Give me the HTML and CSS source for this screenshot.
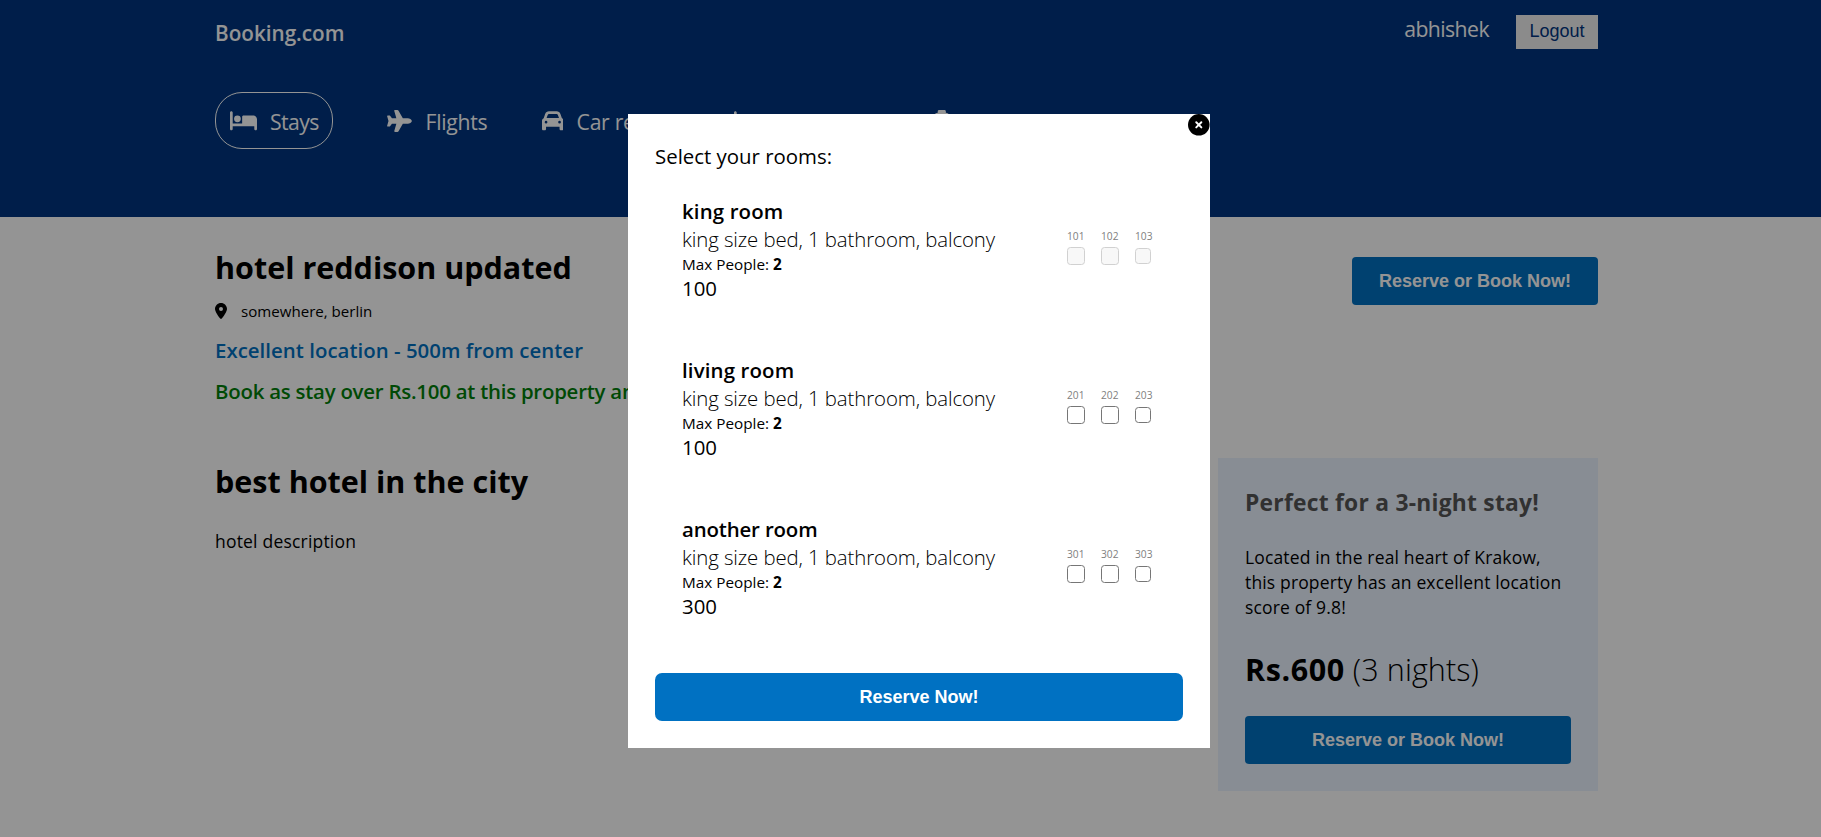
FILE: index.html
```html
<!DOCTYPE html>
<html lang="en">
<head>
<meta charset="utf-8">
<title>Booking.com</title>
<link rel="stylesheet" href="styles.css">
</head>
<body>
<svg class="sprites" width="0" height="0">
  <symbol id="bed" viewBox="0 0 640 512"><path d="M32 32c17.700 0 32 14.300 32 32v256h224V160c0-17.700 14.300-32 32-32h224c53 0 96 43 96 96v224c0 17.700-14.300 32-32 32s-32-14.300-32-32v-64H64v64c0 17.700-14.300 32-32 32S0 465.700 0 448V64C0 46.300 14.300 32 32 32zm144 96a80 80 0 1 1 0 160 80 80 0 1 1 0-160z"/></symbol>
  <symbol id="plane" viewBox="0 0 576 512"><path d="M482.300 192c34.200 0 93.700 29 93.700 64 0 36-59.500 64-93.700 64H365.700l-99.900 174.900c-5.700 10-16.300 16.100-27.800 16.100h-56.200c-10.600 0-18.300-10.200-15.400-20.400L214.900 320H112l-43.200 57.600c-3 4-7.800 6.400-12.800 6.400H14c-7.800 0-14-6.300-14-14 0-1.300.2-2.600.5-3.900L32 256 .5 145.900c-.4-1.300-.5-2.600-.5-3.900 0-7.800 6.300-14 14-14h42c5 0 9.800 2.400 12.800 6.400L112 192h102.900L166.400 21.400C163.500 11.200 171.200 1 181.800 1H238c11.500 0 22.100 6.200 27.800 16.100L365.700 192z"/></symbol>
  <symbol id="car" viewBox="0 0 512 512"><path fill-rule="evenodd" d="M135.200 117.400 109.100 192h293.800l-26.100-74.600c-4.500-12.800-16.600-21.400-30.200-21.400H165.400c-13.600 0-25.700 8.600-30.200 21.400zM39.600 196.800 74.800 96.300C88.300 57.800 124.600 32 165.400 32h181.200c40.800 0 77.100 25.800 90.600 64.300l35.200 100.500c23.200 9.600 39.600 32.500 39.600 59.200v192c0 17.700-14.300 32-32 32h-32c-17.700 0-32-14.300-32-32v-48H96v48c0 17.700-14.300 32-32 32H32c-17.700 0-32-14.300-32-32V256c0-26.700 16.400-49.600 39.600-59.200zM128 288a32 32 0 1 0-64 0 32 32 0 1 0 64 0zm288 32a32 32 0 1 0 0-64 32 32 0 1 0 0 64z"/></symbol>
  <symbol id="taxi" viewBox="0 0 512 512"><path fill-rule="evenodd" d="M192 0c-17.700 0-32 14.300-32 32v32c-41 2-72 26-85 64L39.600 228.800C16.400 238.400 0 261.300 0 288v192c0 17.700 14.300 32 32 32h32c17.700 0 32-14.300 32-32v-48h320v48c0 17.700 14.300 32 32 32h32c17.700 0 32-14.300 32-32V288c0-26.700-16.400-49.600-39.600-59.200L437 128c-13-38-44-62-85-64V32c0-17.700-14.300-32-32-32zM165 128h182c14 0 26 9 30 21l26 75H109l26-75c4-12 16-21 30-21z"/></symbol>
  <symbol id="pin" viewBox="0 0 384 512"><path fill-rule="evenodd" d="M215.700 499.200C267 435 384 279.400 384 192 384 86 298 0 192 0S0 86 0 192c0 87.400 117 243 168.300 307.200 12.300 15.300 35.100 15.300 47.400 0zM192 128a64 64 0 1 1 0 128 64 64 0 1 1 0-128z"/></symbol>
</svg>

<header class="header">
  <div class="topbar">
    <span class="brand">Booking.com</span>
    <div class="account">
      <span class="username">abhishek</span>
      <button class="logout">Logout</button>
    </div>
  </div>
  <nav class="nav">
    <a class="nav-item active"><svg class="icon-bed"><use href="#bed"/></svg><span>Stays</span></a>
    <a class="nav-item flights"><svg class="icon-plane"><use href="#plane"/></svg><span>Flights</span></a>
    <a class="nav-item rentals"><svg class="icon-car"><use href="#car"/></svg><span>Car rentals</span></a>
    <a class="nav-item attractions"><svg class="icon-bed"><use href="#bed"/></svg><span>Attractions</span></a>
    <a class="nav-item"><svg class="icon-car"><use href="#taxi"/></svg><span>Airport taxis</span></a>
  </nav>
</header>

<main class="hotel">
  <div class="summary">
    <div>
      <h1 class="title hotel-name">hotel reddison updated</h1>
      <div class="address"><svg class="icon-pin"><use href="#pin"/></svg><span>somewhere, berlin</span></div>
      <div class="distance">Excellent location - 500m from center</div>
      <div class="offer">Book as stay over Rs.100 at this property and get a free taxi</div>
    </div>
    <button class="primary book-top">Reserve or Book Now!</button>
  </div>
  <div class="details">
    <div>
      <h1 class="title tagline">best hotel in the city</h1>
      <p class="description">hotel description</p>
    </div>
    <aside class="price-card">
      <h2 class="card-title">Perfect for a 3-night stay!</h2>
      <p class="card-text">Located in the real heart of Krakow,<br>this property has an excellent location<br>score of 9.8!</p>
      <div class="price"><b>Rs.600</b> <span>(3 nights)</span></div>
      <button class="primary">Reserve or Book Now!</button>
    </aside>
  </div>
</main>

<div class="overlay">
  <section class="modal">
    <svg class="close" viewBox="0 0 22 22"><circle cx="11" cy="11" r="11"/><path d="M8.400 8.400l5.200 5.200M13.600 8.400l-5.200 5.200"/></svg>
    <div class="modal-title">Select your rooms:</div>
    <div class="room">
      <div>
        <div class="room-name">king room</div>
        <div class="room-desc">king size bed, 1 bathroom, balcony</div>
        <div class="room-max">Max People: <b>2</b></div>
        <div class="room-price">100</div>
      </div>
      <div class="units disabled">
        <label>101<i class="box"></i></label><label>102<i class="box"></i></label><label>103<i class="box small"></i></label>
      </div>
    </div>
    <div class="room">
      <div>
        <div class="room-name">living room</div>
        <div class="room-desc">king size bed, 1 bathroom, balcony</div>
        <div class="room-max">Max People: <b>2</b></div>
        <div class="room-price">100</div>
      </div>
      <div class="units">
        <label>201<i class="box"></i></label><label>202<i class="box"></i></label><label>203<i class="box small"></i></label>
      </div>
    </div>
    <div class="room">
      <div>
        <div class="room-name compact">another room</div>
        <div class="room-desc">king size bed, 1 bathroom, balcony</div>
        <div class="room-max">Max People: <b>2</b></div>
        <div class="room-price">300</div>
      </div>
      <div class="units">
        <label>301<i class="box"></i></label><label>302<i class="box"></i></label><label>303<i class="box small"></i></label>
      </div>
    </div>
    <button class="primary confirm">Reserve Now!</button>
  </section>
</div>
</body>
</html>
```
FILE: styles.css
```css
* { box-sizing: border-box; margin: 0; padding: 0; }
body {
  height: 837px;
  overflow: hidden;
  background: #fff;
  color: #000;
  font: 400 20.4px/28px "Open Sans", "Noto Sans", sans-serif;
}
svg { fill: currentColor; flex: none; display: block; }
b { font-weight: 700; }
.sprites { position: absolute; }
button { border: 0; font-family: "Liberation Sans", Arial, sans-serif; }

.header { height: 217px; padding: 15px 223px 0 215px; background: #003580; color: #fff; }
.topbar { display: flex; justify-content: space-between; height: 34px; }
.brand { padding: 4px 0 0 0; font-weight: 600; font-size: 20.700px; white-space: nowrap; }
.account { display: flex; gap: 27px; }
.username { font-size: 21.200px; letter-spacing: -0.550px; }
.logout { width: 82px; height: 34px; padding-bottom: 2px; background: #f0f0f0; color: #003580; font-size: 18px; }
.nav { display: flex; gap: 54px; margin-top: 43px; height: 57px; white-space: nowrap; }
.nav-item { display: flex; align-items: center; gap: 13.500px; }
.nav-item span { padding-top: 2px; font-size: 21.200px; letter-spacing: -0.300px; }
.nav-item.active { width: 118px; padding: 0 13.500px; border: 1px solid #fff; border-radius: 27px; }
.nav-item.active span { letter-spacing: -0.600px; }
.flights { width: 100.500px; }
.rentals { width: 138px; }
.attractions { width: 143px; }
.icon-bed { width: 27px; height: 21.600px; }
.icon-plane { width: 25px; height: 22px; }
.icon-car { width: 21.600px; height: 21.600px; }

.hotel { padding: 28px 223px 0 215px; }
.summary { display: flex; justify-content: space-between; align-items: flex-start; height: 213px; white-space: nowrap; }
.title { font-size: 30.500px; line-height: 44px; font-weight: 700; }
.address { display: flex; align-items: center; gap: 14px; margin-top: 11px; font-size: 15.100px; line-height: 22px; }
.icon-pin { width: 12px; height: 16px; }
.distance { margin-top: 14px; color: #0071c2; font-weight: 600; letter-spacing: 0.030px; }
.offer { margin-top: 13px; color: #008009; font-weight: 600; letter-spacing: -0.230px; }
.primary {
  display: block;
  width: 100%;
  height: 48px;
  border-radius: 4px;
  background: #0071c2;
  color: #fff;
  font-size: 18px;
  font-weight: 700;
}
.book-top { width: 246px; margin-top: 12px; }
.details { display: flex; justify-content: space-between; align-items: flex-start; }
.tagline { margin-top: 1px; }
.description { margin-top: 26px; font-size: 17.500px; line-height: 25px; letter-spacing: 0.200px; }
.price-card { width: 380px; height: 333px; padding: 27px; background: #ebf3ff; }
.card-title { padding: 1px 0 0; color: #555; font-size: 22.800px; line-height: 33px; letter-spacing: 0.250px; }
.card-text { margin-top: 26px; font-size: 17.500px; line-height: 25px; letter-spacing: 0.150px; white-space: nowrap; }
.price { margin: 27px 0 25px; font-size: 30.500px; line-height: 44px; font-weight: 300; white-space: nowrap; }
.price b { letter-spacing: 0.600px; }
.price span { letter-spacing: 0.100px; }

.overlay { position: fixed; inset: 0; padding: 114px 0 0 628px; background: rgba(0, 0, 0, 0.418); }
.modal { position: relative; width: 582px; height: 634px; padding: 28px 27px 27px; background: #fff; }
.close { position: absolute; top: 0; right: 0; width: 21.600px; height: 21.600px; }
.close path { stroke: #fff; stroke-width: 2; stroke-linecap: round; }
.room { display: flex; justify-content: space-between; padding: 27px 30px 27px 27px; white-space: nowrap; }
.room-name { font-weight: 600; line-height: 28px; letter-spacing: 0.150px; }
.room-name.compact { letter-spacing: -0.150px; }
.room-desc { font-weight: 300; line-height: 27px; padding-top: 1px; letter-spacing: -0.100px; }
.room-max { font-size: 15.300px; line-height: 22px; }
.room-price { line-height: 27px; }
.units { display: flex; gap: 16px; padding-top: 31px; color: #808080; }
.units label { display: flex; flex-direction: column; align-items: flex-start; width: 18px; font-size: 10.200px; line-height: 16px; }
.box { width: 18px; height: 18px; margin-top: 3px; border: 1.500px solid #767676; border-radius: 3.500px; background: #fff; }
.box.small { width: 16px; height: 16px; margin-top: 4px; }
.disabled .box { border-color: #d1d1d1; background: #f8f8f8; }
.confirm { margin-top: 26px; border-radius: 7px; }
```
